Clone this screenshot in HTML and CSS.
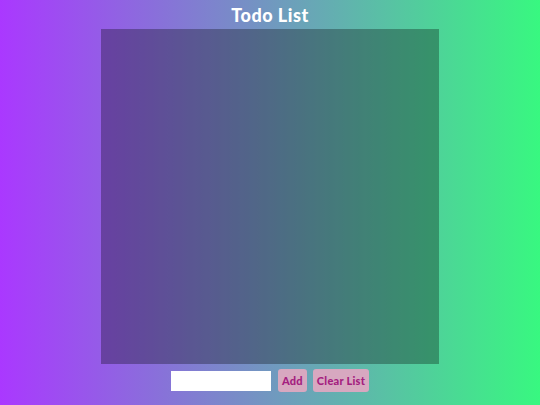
FILE: index.html
```html
<!DOCTYPE html>
<html>
<head>
<meta charset="utf-8">
<link rel="stylesheet" href="styles.css">
</head>
<body>
<div class="app">
  <h1 class="title">Todo List</h1>
  <div class="list"></div>
  <form class="controls" onsubmit="return false">
    <input class="entry" type="text">
    <button class="btn" type="button">Add</button>
    <button class="btn" type="button">Clear List</button>
  </form>
</div>
</body>
</html>
```
FILE: styles.css
```css
html, body {
  margin: 0;
  padding: 0;
  height: 100%;
}
body {
  background: linear-gradient(to right, #aa38ff, #38f880);
  font-family: "Lato", "DejaVu Sans", sans-serif;
}
.app {
  display: flex;
  flex-direction: column;
  align-items: center;
  height: 405px;
}
.title {
  margin: 0;
  padding-top: 4px;
  height: 25px;
  box-sizing: border-box;
  color: #ffffff;
  font-size: 18px;
  font-weight: 900;
  line-height: 22px;
  letter-spacing: 0.5px;
}
.list {
  width: 338px;
  height: 335px;
  margin-top: 4px;
  background: rgba(0, 0, 0, 0.3);
}
.controls {
  display: flex;
  align-items: center;
  gap: 6px;
  margin-top: 5px;
}
.entry {
  width: 100px;
  height: 20px;
  box-sizing: border-box;
  border: none;
  background: #ffffff;
  margin-right: 1px;
  padding: 0 4px;
}
.btn {
  height: 23px;
  padding: 0 4px;
  border: none;
  border-radius: 3px;
  background: #d7a8c0;
  color: #a4207f;
  font-family: "Lato", "DejaVu Sans", sans-serif;
  font-weight: 900;
  font-size: 11px;
  letter-spacing: 0.25px;
  cursor: pointer;
}
```
